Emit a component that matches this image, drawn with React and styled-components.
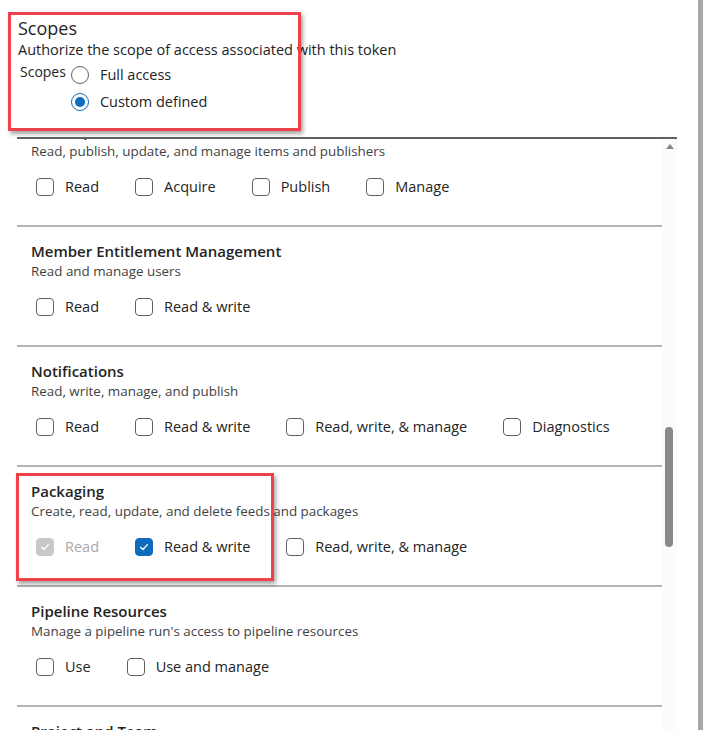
import React, { useLayoutEffect, useRef, useState } from "react";
import styled, { createGlobalStyle } from "styled-components";

const GlobalStyle = createGlobalStyle`
  html, body {
    margin: 0;
    padding: 0;
    background: #fff;
  }
  body {
    font-family: "Open Sans", "Noto Sans", sans-serif;
    color: #242424;
  }
  * {
    box-sizing: border-box;
  }
`;

const scopes = [
  { title: "Agent Pools", desc: "Read, manage, and listen to agent pools", options: ["Read", "Read & manage"] },
  { title: "Analytics", desc: "Read analytics data", options: ["Read"] },
  { title: "Auditing", desc: "Read audit log events", options: ["Read Audit Log"] },
  { title: "Build", desc: "Artifacts, definitions, requests, queue a build, and update build properties", options: ["Read", "Read & execute"] },
  { title: "Code", desc: "Source code, repositories, pull requests, and notifications", options: ["Read", "Read & write", "Read, write, & manage", "Full", "Status"] },
  { title: "Connected Server", desc: "Access endpoints", options: ["Connected server"] },
  { title: "Entitlements", desc: "Read entitlements", options: ["Read"] },
  { title: "Extension Data", desc: "Read and write extension data", options: ["Read", "Read & write"] },
  { title: "Extensions", desc: "Read, install, update, and manage extensions", options: ["Read", "Read & manage"] },
  { title: "Graph & Identity", desc: "Read and manage users, groups, scopes and group memberships", options: ["Read", "Read & manage"] },
  { title: "Load Test", desc: "Read and manage load tests", options: ["Read", "Read & write"] },
  { title: "Marketplace", desc: "Read, publish, update, and manage items and publishers", options: ["Read", "Acquire", "Publish", "Manage"] },
  { title: "Member Entitlement Management", desc: "Read and manage users", options: ["Read", "Read & write"] },
  { title: "Notifications", desc: "Read, write, manage, and publish", options: ["Read", "Read & write", "Read, write, & manage", "Diagnostics"] },
  {
    title: "Packaging",
    desc: "Create, read, update, and delete feeds and packages",
    options: ["Read", "Read & write", "Read, write, & manage"],
    checked: { "Read & write": true },
    disabled: { Read: true },
  },
  { title: "Pipeline Resources", desc: "Manage a pipeline run's access to pipeline resources", options: ["Use", "Use and manage"] },
  { title: "Project and Team", desc: "Create, read, update, and delete projects and teams", options: ["Read", "Read & write", "Read, write, & manage"] },
  { title: "Release", desc: "Read, update, and delete releases", options: ["Read", "Read, write, & execute", "Read, write, execute, & manage"] },
  { title: "Secure Files", desc: "Read, create, and manage secure files", options: ["Read", "Read & create", "Read, create, & manage"] },
  { title: "Service Connections", desc: "Read, query, and manage service connections", options: ["Read", "Read & query", "Read, query, & manage"] },
  { title: "Symbols", desc: "Read, write, and manage symbols", options: ["Read", "Read & write", "Read, write, & manage"] },
  { title: "Task Groups", desc: "Read, create, and manage task groups", options: ["Read", "Read & create", "Read, create, & manage"] },
  { title: "Test Management", desc: "Read, create, and update test plans", options: ["Read", "Read & write"] },
];

function CheckIcon() {
  return (
    <svg width="12" height="12" viewBox="0 0 12 12" fill="none">
      <path d="M2.6 6.3 L5 8.5 L9.4 3.6" stroke="#fff" strokeWidth="1.3" strokeLinecap="round" strokeLinejoin="round" />
    </svg>
  );
}

function ScopeSection({ scope, innerRef }) {
  const checked = scope.checked || {};
  const disabled = scope.disabled || {};
  return (
    <Section ref={innerRef}>
      <SectionTitle>{scope.title}</SectionTitle>
      <SectionDesc>{scope.desc}</SectionDesc>
      <OptionRow>
        {scope.options.map((opt) => {
          const isDisabled = !!disabled[opt];
          const isChecked = !!checked[opt] || isDisabled;
          return (
            <Option key={opt}>
              <Box $checked={isChecked} $disabled={isDisabled}>
                {isChecked && <CheckIcon />}
              </Box>
              <OptionLabel $disabled={isDisabled}>{opt}</OptionLabel>
            </Option>
          );
        })}
      </OptionRow>
    </Section>
  );
}

export default function App() {
  const scrollRef = useRef(null);
  const marketRef = useRef(null);
  const [thumb, setThumb] = useState({ top: 285, height: 119 });

  useLayoutEffect(() => {
    const el = scrollRef.current;
    const target = marketRef.current;
    if (!el || !target) return;
    el.scrollTop = target.offsetTop - el.offsetTop + 32;
    const track = el.clientHeight - 30;
    setThumb({
      top: 13 + (el.scrollTop / el.scrollHeight) * track,
      height: (el.clientHeight / el.scrollHeight) * track,
    });
  }, []);

  return (
    <>
      <GlobalStyle />
      <Page>
        <Main>
          <Header>
            <Title>Scopes</Title>
            <Subtitle>Authorize the scope of access associated with this token</Subtitle>
            <RadioGroup>
              <GroupLabel>Scopes</GroupLabel>
              <RadioList>
                <RadioRow>
                  <Radio />
                  <RadioText>Full access</RadioText>
                </RadioRow>
                <RadioRow>
                  <Radio $checked />
                  <RadioText>Custom defined</RadioText>
                </RadioRow>
              </RadioList>
            </RadioGroup>
          </Header>

          <Panel>
            <Scroller ref={scrollRef}>
              {scopes.map((s) => (
                <ScopeSection
                  key={s.title}
                  scope={s}
                  innerRef={s.title === "Marketplace" ? marketRef : undefined}
                />
              ))}
            </Scroller>
            <Track>
              <UpArrow />
              <Thumb style={{ top: thumb.top, height: thumb.height }} />
            </Track>
          </Panel>
        </Main>
        <EdgeBar />

        <Highlight $left={8} $top={12} $width={293} $height={119} />
        <Highlight $left={16} $top={473} $width={258} $height={108} />
      </Page>
    </>
  );
}

const Page = styled.div`
  position: relative;
  display: flex;
  height: 730px;
  overflow: hidden;
`;

const Main = styled.div`
  flex: 1;
  min-width: 0;
  display: flex;
  flex-direction: column;
  padding: 16px 21px 0 17px;
`;

const EdgeBar = styled.div`
  width: 5px;
  background: #a8a8a8;
`;

const Header = styled.div`
  display: flex;
  flex-direction: column;
  padding-left: 1px;
  margin-bottom: 22px;
`;

const Title = styled.div`
  font-size: 18px;
  line-height: 24px;
  color: #242424;
`;

const Subtitle = styled.div`
  font-size: 14.5px;
  line-height: 20px;
  color: #242424;
`;

const RadioGroup = styled.div`
  display: flex;
  align-items: flex-start;
  margin-top: 2px;
`;

const GroupLabel = styled.div`
  font-size: 14px;
  line-height: 20px;
  padding-left: 2px;
  margin-right: 5px;
`;

const RadioList = styled.div`
  display: flex;
  flex-direction: column;
  gap: 1px;
`;

const RadioRow = styled.div`
  display: flex;
  align-items: center;
  height: 26px;
  gap: 11px;
`;

const Radio = styled.span`
  width: 18px;
  height: 18px;
  border-radius: 50%;
  border: 1px solid ${(p) => (p.$checked ? "#0f6cbd" : "#616161")};
  display: flex;
  align-items: center;
  justify-content: center;
  &::after {
    content: "";
    display: ${(p) => (p.$checked ? "block" : "none")};
    width: 10px;
    height: 10px;
    border-radius: 50%;
    background: #0f6cbd;
  }
`;

const RadioText = styled.span`
  font-size: 14.5px;
  line-height: 20px;
`;

const Panel = styled.div`
  flex: 1;
  min-height: 0;
  display: flex;
  border-top: 2px solid #616161;
`;

const Scroller = styled.div`
  flex: 1;
  min-width: 0;
  overflow-y: scroll;
  scrollbar-width: none;
  &::-webkit-scrollbar {
    display: none;
  }
`;

const Track = styled.div`
  position: relative;
  width: 15px;
  background: #fbfbfb;
`;

const UpArrow = styled.div`
  width: 0;
  height: 0;
  margin: 5px auto 0;
  border-left: 4.5px solid transparent;
  border-right: 4.5px solid transparent;
  border-bottom: 5px solid #858585;
`;

const Thumb = styled.div`
  position: absolute;
  left: 3px;
  width: 8px;
  border-radius: 4px;
  background: #8a8a8a;
`;

const Section = styled.div`
  height: 120px;
  padding: 14px 14px 0;
  border-bottom: 2px solid #b3b3b3;
`;

const SectionTitle = styled.div`
  font-size: 15px;
  line-height: 20px;
  font-weight: 600;
  color: #242424;
`;

const SectionDesc = styled.div`
  font-size: 13.4px;
  line-height: 18px;
  margin-top: 1px;
  color: #424242;
`;

const OptionRow = styled.div`
  display: flex;
  align-items: center;
  gap: 36px;
  height: 24px;
  margin-top: 15px;
  padding-left: 5px;
`;

const Option = styled.label`
  display: flex;
  align-items: center;
  gap: 11px;
`;

const Box = styled.span`
  width: 18px;
  height: 18px;
  border-radius: 4px;
  display: flex;
  align-items: center;
  justify-content: center;
  border: 1px solid
    ${(p) => (p.$disabled ? "#c8c8c8" : p.$checked ? "#0f6cbd" : "#616161")};
  background: ${(p) => (p.$disabled ? "#c8c8c8" : p.$checked ? "#0f6cbd" : "#fff")};
`;

const OptionLabel = styled.span`
  font-size: 14.5px;
  line-height: 20px;
  white-space: nowrap;
  color: ${(p) => (p.$disabled ? "#a8a8a8" : "#242424")};
`;

const Highlight = styled.div`
  position: absolute;
  left: ${(p) => p.$left}px;
  top: ${(p) => p.$top}px;
  width: ${(p) => p.$width}px;
  height: ${(p) => p.$height}px;
  border: 3px solid #ef4149;
  box-shadow: 2px 3px 4px rgba(0, 0, 0, 0.35);
  pointer-events: none;
`;
